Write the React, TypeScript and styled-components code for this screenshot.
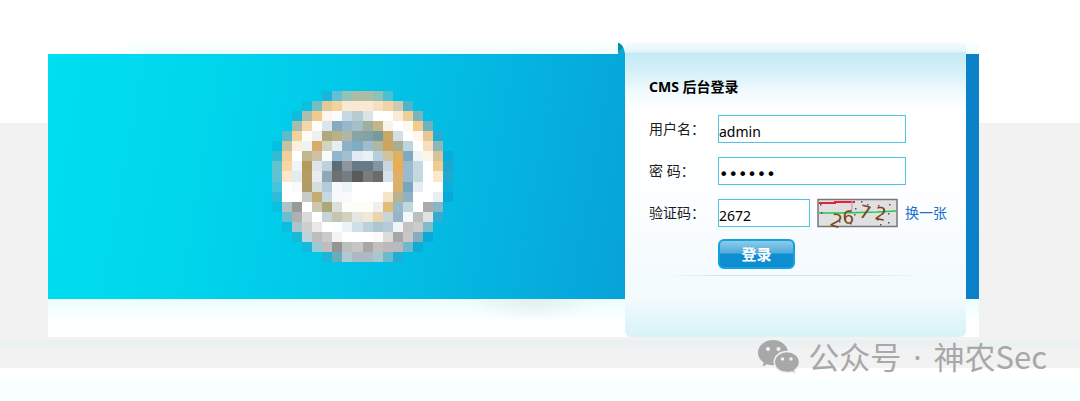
import React, { useState } from 'react';
import styled, { createGlobalStyle } from 'styled-components';

const GlobalStyle = createGlobalStyle`
  * { box-sizing: border-box; }
  html { min-height: 100%; background: #fff; }
  body {
    margin: 0;
    color: #1c1c1c;
    font: 14px/20px 'Noto Sans', 'Noto Sans CJK SC', sans-serif;
  }
`;

const Page = styled.div`
  position: relative;
  display: flex;
  flex-direction: column;
  min-height: 100vh;
  background: linear-gradient(
    #fff 0 123px,
    #f2f2f2 123px 340px,
    #ebf1f1 340px 346px,
    #f2f2f2 350px 368px,
    #fff 368px 380px,
    #f8ffff 380px 390px,
    #fbffff 401px
  );
`;

const Stage = styled.main`
  display: grid;
  grid-template-columns: minmax(0, 1fr) 341px 13px;
  margin: 42px 101px 0 48px;
  min-height: 295px;
  background:
    linear-gradient(90deg, #fff 70px, #fff0 95px) 0 0 / 100% 12px no-repeat,
    linear-gradient(#f9ffff, #f0fdfd) 0 0 / 100% 12px no-repeat,
    linear-gradient(100deg, #00def0 0%, #00d5ec 18%, #02c5e8 34%, #07a2d8 64%, #0a82c8 92%, #0a80c8 100%)
      0 12px / 100% 245px no-repeat,
    radial-gradient(ellipse at 50% 0, #e2efee, #e2efee00 70%) 420px 257px / 130px 22px no-repeat,
    linear-gradient(#ecfcfc, #fbffff 20px, #fff 38px) 0 257px / 100% 38px no-repeat,
    #fff;
`;

const Banner = styled.section`
  display: flex;
  justify-content: center;
  align-items: flex-start;
  padding: 49px 0 0 51px;
`;

const Avatar = styled.svg`
  display: block;
  width: 181px;
  height: 171px;
`;

const Panel = styled.section`
  position: relative;
  padding: 35px 18px 0 24px;
  border-radius: 6px;
  background: linear-gradient(
    #f5fcfe 0,
    #e2f5fa 10px,
    #c4eaf5 11px,
    #d3f0f8 28px,
    #f1fafd 50px,
    #fff 68px,
    #fdfeff 150px,
    #f5fbfe 220px,
    #f3fbfe 255px,
    #e4f6fa 275px,
    #d9f3f9 295px
  );
`;

const Fold = styled.svg`
  position: absolute;
  top: 0;
  left: -8px;
`;

const Heading = styled.h1`
  margin: 0 0 18px;
  color: #000;
  font-size: 14px;
  line-height: 20px;
  font-weight: 700;
`;

const Row = styled.div`
  display: grid;
  grid-template-columns: 69px minmax(0, 1fr);
  align-items: center;
  margin-bottom: 14px;
`;

const Actions = styled.div`
  margin: -2px 0 6px 69px;
`;

const Controls = styled.div`
  display: flex;
  align-items: center;
  gap: 7px;
`;

const Input = styled.input<{ $width: number }>`
  width: ${(p) => p.$width}px;
  height: 28px;
  padding: 4px 0 0;
  border: 1px solid #4fc3e2;
  border-radius: 0;
  outline: 0;
  background: #fff;
  color: #000;
  font: inherit;

  &[type='password'] {
    padding-top: 6px;
    font-family: 'DejaVu Sans', sans-serif;
    font-size: 16px;
  }
`;

const CaptchaImage = styled.svg`
  display: block;
  flex: none;
`;

const Refresh = styled.a`
  color: #1a70cc;
  text-decoration: none;
  white-space: nowrap;
`;

const Submit = styled.button`
  display: block;
  width: 77px;
  height: 30px;
  padding: 0;
  border: 2px solid #12a3dc;
  border-radius: 6px;
  background: linear-gradient(#8fcbe9 0, #4fabdc 46%, #0f8ed2 50%, #0d8cd0 100%);
  color: #fff;
  font: inherit;
  font-size: 15px;
  font-weight: 700;
`;

const Divider = styled.hr`
  height: 1px;
  margin: 0 24px 0 20px;
  border: 0;
  background: linear-gradient(90deg, #d9e0e300, #d9e0e3 20%, #d9e0e3 75%, #d9e0e300);
`;

const Watermark = styled.div`
  position: absolute;
  top: 335px;
  right: 33px;
  display: flex;
  align-items: center;
  gap: 8px;
  color: #a8a8a8;
  font: 31px/42px 'Noto Sans CJK SC', sans-serif;
  white-space: nowrap;
`;

const MiddleDot = styled.span`
  padding: 0 5px;
  font-family: 'Noto Sans', sans-serif;
`;

const avatarRows: string[] = [
  '- - - - - 1bb5d8 62c1d0 95c2b7 adbda5 adbda5 90c0b8 4bc0d4 - - - - - -',
  '- - - 0dbfe0 76bcc3 e2c998 f4d29c fae9d2 fae9d2 fae9d2 f6dfc0 f2d4a4 cdcab0 50b4cc - - - -',
  '- - 12bbdc acbfad f2ca8e fdf5ec f9fbfd c6d9e2 b8cccf dbe4e4 ffffff ffffff faebd8 efcf98 7cb4ba - - -',
  '- - a5bdae f5d6a8 fffdfa dae6ec 86abc1 98b7ca a5bfc9 9fae9d c5b785 f8f4ec ffffff fdf9f1 f1cc8c 6fb2be - -',
  '- 5cbcca f4d09a fefcf8 eef1f2 b2a87e bcb087 b1b7a4 88a4a4 84a1a5 789a9c c8a862 d2dfe6 ffffff fff6ef e7c794 26acd4 -',
  '05c0e0 c5c2a2 fbefdf eff3f6 d8ad69 d4d2c0 e6eef3 8cb1c8 7facc4 9fbdcf b0b7a2 cba55e a9ad91 bed5e0 ffffff f6dfba 8cb9b5 -',
  '2ebbd3 f2cf98 ffffff c2b68d cec1a4 f8fafc 92b7cc a2bfd2 e2ebf3 e9f1f4 b6cdda d0c39e dfb060 7fa9c3 eff4f8 fdf5e8 d6c39b 06acda',
  '60c4cf f5d6a4 eff4f8 b49a5b dde4ec c0d0da 5a6e77 8e959d 677b84 677b84 8296a0 c6d7e0 e9ac51 9bbacd c6d8e1 ffffff f1cc90 1ba9d4',
  '5fc4d0 fae7cd e4eced b59c60 e9edf2 8fa8b8 6e7072 727e83 5b5b5b 7d7c7c 6c6b6c d6e1e8 deb069 99bacf c4d8e1 ffffff fae8cd 20aad2',
  '43c5dc ffffff f9fbfb b09d65 d6dedb b4cbd8 f7f8fb eef4f6 ffffff ffffff ffffff ffffff d9b16d 79a6be e6eef3 ffffff ffffff 0bb0dc',
  '2fbbd5 ffffff fefefe c7ccc4 c4ac72 c7d8e2 f8f9fc fafafd ffffff ffffff ffffff f6e4c9 bab18d 8fb1c6 ffffff ffffff e8eef1 06aad8',
  '06c2e0 b1c1c8 999999 ffffff ccc7ad aca87c dbe0dd fdfdfb fdfcf9 fdfcf9 f1f0ec e1bc7a 9bb9c7 c2d6e0 ffffff ababab 89b6c6 -',
  '- 69bfd1 b1b0b0 dadada ffffff c5d4d7 c4c6b1 d2d1bd e5e6e0 f2e8d8 e8d4ae c8d5d4 94b5c9 f3f6fa bfbebe e2e2e3 35abcf -',
  '- 0abedf a8c5cf cfcfcf e9e8e8 ffffff fbfdfe edf2f6 d0dfe7 bad0db adc6d3 b5cbd7 f2f5f5 c4c3c2 cccbcb 7dbccb - -',
  '- - 1ab9da bed2dc bdbcbc cacaca f3f3f3 ffffff ffffff ffffff fafafa dcdcdc a7a7a6 c7c7c6 85adbe 08abd8 - -',
  '- - - 16b9dc 9bcad7 bfbebe 949494 bebebe c6c6c6 a7a7a7 c1c0bf bbb9b9 b8bbbd 6fb9ce 0dadd8 - - -',
  '- - - - - 1db4d6 69adbd b0c8d2 b0b8c2 aeb9c3 a9c7cf 6bbad0 21aed5 - - - - -',
];

function PixelAvatar() {
  return (
    <Avatar viewBox="0 0 18 17" preserveAspectRatio="none" shapeRendering="crispEdges" aria-hidden="true">
      {avatarRows.map((row, y) =>
        row.split(' ').map((color, x) =>
          color === '-' ? null : (
            <rect key={`${x}-${y}`} x={x} y={y} width="1" height="1" fill={`#${color}`} />
          ),
        ),
      )}
    </Avatar>
  );
}

const captchaDigits = [
  { char: '2', x: 12, y: 26, angle: 18 },
  { char: '6', x: 26, y: 25, angle: -4 },
  { char: '7', x: 41, y: 18, angle: 14 },
  { char: '2', x: 57, y: 20, angle: 10 },
];

const captchaDots = [
  [3, 5], [12, 3], [44, 2], [38, 9], [61, 6], [72, 5], [71, 14], [4, 13], [22, 22],
  [33, 24], [50, 5], [63, 25], [71, 23], [60, 20], [37, 15], [66, 10],
];

function Captcha() {
  return (
    <CaptchaImage width="81" height="28" viewBox="0 0 81 28" overflow="visible" role="img" aria-label="验证码图片">
      <rect x="1" y="0.5" width="79" height="27" fill="#e0e0e0" stroke="#777" strokeWidth="1.5" />
      <path d="M2 4H18V3H38" fill="none" stroke="#ea2038" strokeWidth="2" />
      <path d="M2 14H24L60 13L79 12" fill="none" stroke="#25c84a" strokeWidth="1.5" />
      <path d="M35 2V10L33 13" fill="none" stroke="#cf93b8" strokeWidth="1.2" />
      {captchaDots.map(([x, y]) => (
        <rect key={`${x}-${y}`} x={x} y={y} width="1.5" height="1.5" fill="#6a35a0" />
      ))}
      {captchaDigits.map((d) => (
        <text
          key={d.x}
          x={d.x}
          y={d.y}
          transform={`rotate(${d.angle} ${d.x} ${d.y})`}
          fontFamily="'DejaVu Sans', sans-serif"
          fontSize="18"
          fill="#7b461a"
        >
          {d.char}
        </text>
      ))}
    </CaptchaImage>
  );
}

function ChatIcon() {
  return (
    <svg width="42" height="34" viewBox="0 0 42 34" aria-hidden="true">
      <path
        fill="#a8a8a8"
        d="M15 0C6.7 0 0 5.7 0 12.8C0 16.8 2.2 20.3 5.6 22.6L4.6 26.4L9.2 24.3C11 24.9 13 25.2 15 25.2C23.3 25.2 30 19.8 30 12.8C30 5.7 23.3 0 15 0Z"
      />
      <path
        fill="#a8a8a8"
        stroke="#f0f1f1"
        strokeWidth="1.5"
        d="M29 11.5C21.9 11.5 16.3 16.2 16.3 22C16.3 28 21.9 32.6 29 32.6C30.7 32.6 32.3 32.3 33.8 31.9L37.5 33.6L36.6 30.3C39.6 28.4 41.5 25.4 41.5 22C41.5 16.2 36 11.5 29 11.5Z"
      />
      <g fill="#f2f2f2">
        <circle cx="10" cy="9" r="2" />
        <circle cx="20.5" cy="9" r="2" />
        <circle cx="24.5" cy="19" r="1.7" />
        <circle cx="33" cy="19" r="1.7" />
      </g>
    </svg>
  );
}

export default function App() {
  const [user, setUser] = useState('admin');
  const [password, setPassword] = useState('123456');
  const [code, setCode] = useState('2672');

  return (
    <>
      <GlobalStyle />
      <Page>
        <Stage>
          <Banner>
            <PixelAvatar />
          </Banner>
          <Panel>
            <Fold width="8" height="12" viewBox="0 0 8 12" aria-hidden="true">
              <path d="M1 12V1C5 2 7 5 8 12Z" fill="#12a9c8" />
              <path d="M1 9V1C3 1 5 3 6 6Z" fill="#0b8cab" />
            </Fold>
            <Heading>CMS 后台登录</Heading>
            <form onSubmit={(e) => e.preventDefault()}>
              <Row>
                <label htmlFor="user">用户名：</label>
                <Input id="user" $width={188} value={user} onChange={(e) => setUser(e.target.value)} />
              </Row>
              <Row>
                <label htmlFor="password">密 码：</label>
                <Input
                  id="password"
                  type="password"
                  $width={188}
                  value={password}
                  onChange={(e) => setPassword(e.target.value)}
                />
              </Row>
              <Row>
                <label htmlFor="code">验证码：</label>
                <Controls>
                  <Input id="code" $width={92} value={code} onChange={(e) => setCode(e.target.value)} />
                  <Captcha />
                  <Refresh href="#captcha">换一张</Refresh>
                </Controls>
              </Row>
              <Actions>
                <Submit type="submit">登录</Submit>
              </Actions>
            </form>
            <Divider />
          </Panel>
        </Stage>
        <Watermark>
          <ChatIcon />
          <span>
            公众号 <MiddleDot>·</MiddleDot> 神农Sec
          </span>
        </Watermark>
      </Page>
    </>
  );
}
